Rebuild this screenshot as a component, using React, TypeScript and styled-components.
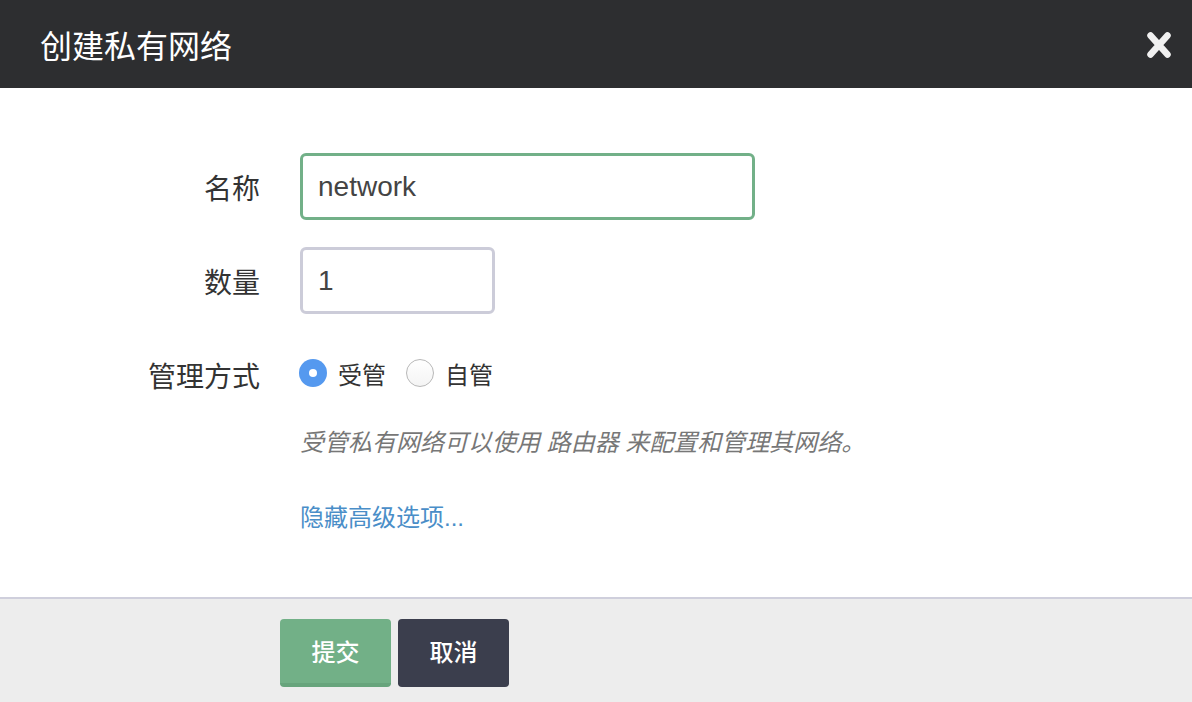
import React from "react";
import styled, { createGlobalStyle } from "styled-components";

const Global = createGlobalStyle`
  html, body { margin: 0; padding: 0; background: #ffffff; }
  body {
    font-family: "Liberation Sans", "Noto Sans CJK SC", sans-serif;
    color: #333;
    width: 1192px;
    height: 702px;
    overflow: hidden;
  }
  * { box-sizing: border-box; }
`;

const Dialog = styled.div`
  width: 1192px;
  height: 702px;
  display: flex;
  flex-direction: column;
  background: #fff;
`;

const Header = styled.header`
  height: 88px;
  background: #2d2e30;
  display: flex;
  align-items: center;
  justify-content: space-between;
  padding: 0 20px 0 40px;
`;

const Title = styled.h1`
  margin: 0;
  font-size: 32px;
  font-weight: 400;
  color: #ffffff;
`;

const CloseButton = styled.button`
  border: none;
  background: transparent;
  padding: 0;
  width: 26px;
  height: 28px;
  margin-top: 1px;
  display: flex;
  align-items: center;
  justify-content: center;
  cursor: pointer;
`;

const Body = styled.main`
  flex: 1;
  padding-top: 65px;
  display: flex;
  flex-direction: column;
`;

const Rows = styled.div`
  display: flex;
  flex-direction: column;
  gap: 27px;
`;

const Row = styled.div`
  display: grid;
  grid-template-columns: 260px 1fr;
  column-gap: 40px;
  align-items: center;
  min-height: 67px;
`;

const Label = styled.label`
  text-align: right;
  font-size: 28px;
  color: #333;
`;

const Input = styled.input<{ $width: number; $focused?: boolean }>`
  width: ${(p) => p.$width}px;
  height: 67px;
  border: 3px solid ${(p) => (p.$focused ? "#72b088" : "#ccccd9")};
  border-radius: 6px;
  padding: 0 15px;
  font-family: "Liberation Sans", "Noto Sans CJK SC", sans-serif;
  font-size: 28px;
  color: #444;
  outline: none;
  background: #fff;
`;

const RadioGroup = styled.div`
  display: flex;
  align-items: center;
  margin-left: -1px;
  margin-top: -3px;
`;

const RadioOption = styled.label`
  display: flex;
  align-items: center;
  gap: 11px;
  margin-right: 20px;
  font-size: 24px;
  color: #333;
  cursor: pointer;
`;

const RadioDot = styled.span<{ $checked?: boolean }>`
  width: 28px;
  height: 28px;
  border-radius: 50%;
  display: inline-flex;
  align-items: center;
  justify-content: center;
  background: ${(p) =>
    p.$checked ? "#5599ef" : "linear-gradient(#ffffff, #f4f4f4)"};
  border: ${(p) => (p.$checked ? "none" : "1.5px solid #b8b8b8")};
  &::after {
    content: "";
    display: ${(p) => (p.$checked ? "block" : "none")};
    width: 8px;
    height: 8px;
    border-radius: 50%;
    background: #fff;
  }
`;

const Indented = styled.div<{ $mt: number }>`
  margin-top: ${(p) => p.$mt}px;
  padding-left: 300px;
  line-height: 34px;
`;

const HelpText = styled.p`
  margin: 0;
  font-size: 24px;
  font-style: italic;
  color: #777;
`;

const Link = styled.a`
  font-size: 24px;
  color: #4a8ec8;
  text-decoration: none;
  cursor: pointer;
`;

const Footer = styled.footer`
  height: 105px;
  border-top: 2px solid #cfcfdc;
  background: #ededed;
  display: flex;
  align-items: flex-start;
  gap: 7px;
  padding: 20px 0 0 280px;
`;

const Button = styled.button<{ $variant: "primary" | "dark" }>`
  width: 111px;
  height: 68px;
  border: none;
  border-radius: 4px;
  font-family: "Liberation Sans", "Noto Sans CJK SC", sans-serif;
  font-size: 24px;
  font-weight: 500;
  color: #fff;
  background: ${(p) => (p.$variant === "primary" ? "#72b087" : "#3b3e4d")};
  border-bottom: 4px solid
    ${(p) => (p.$variant === "primary" ? "#67a47c" : "#3b3e4d")};
  padding-top: 0;
  cursor: pointer;
`;

export default function App() {
  return (
    <>
      <Global />
      <Dialog>
        <Header>
          <Title>创建私有网络</Title>
          <CloseButton aria-label="close">
            <svg width="26" height="28" viewBox="0 0 26 28">
              <path
                d="M4.5 4.5 L21.5 23.5 M21.5 4.5 L4.5 23.5"
                stroke="#f0f0f0"
                strokeWidth="6.5"
                strokeLinecap="round"
              />
            </svg>
          </CloseButton>
        </Header>
        <Body>
          <Rows>
            <Row>
              <Label>名称</Label>
              <Input $width={455} $focused defaultValue="network" />
            </Row>
            <Row>
              <Label>数量</Label>
              <Input $width={195} defaultValue="1" />
            </Row>
            <Row>
              <Label>管理方式</Label>
              <RadioGroup>
                <RadioOption>
                  <RadioDot $checked />
                  受管
                </RadioOption>
                <RadioOption>
                  <RadioDot />
                  自管
                </RadioOption>
              </RadioGroup>
            </Row>
          </Rows>
          <Indented $mt={18}>
            <HelpText>受管私有网络可以使用 路由器 来配置和管理其网络。</HelpText>
          </Indented>
          <Indented $mt={41}>
            <Link>隐藏高级选项...</Link>
          </Indented>
        </Body>
        <Footer>
          <Button $variant="primary">提交</Button>
          <Button $variant="dark">取消</Button>
        </Footer>
      </Dialog>
    </>
  );
}
